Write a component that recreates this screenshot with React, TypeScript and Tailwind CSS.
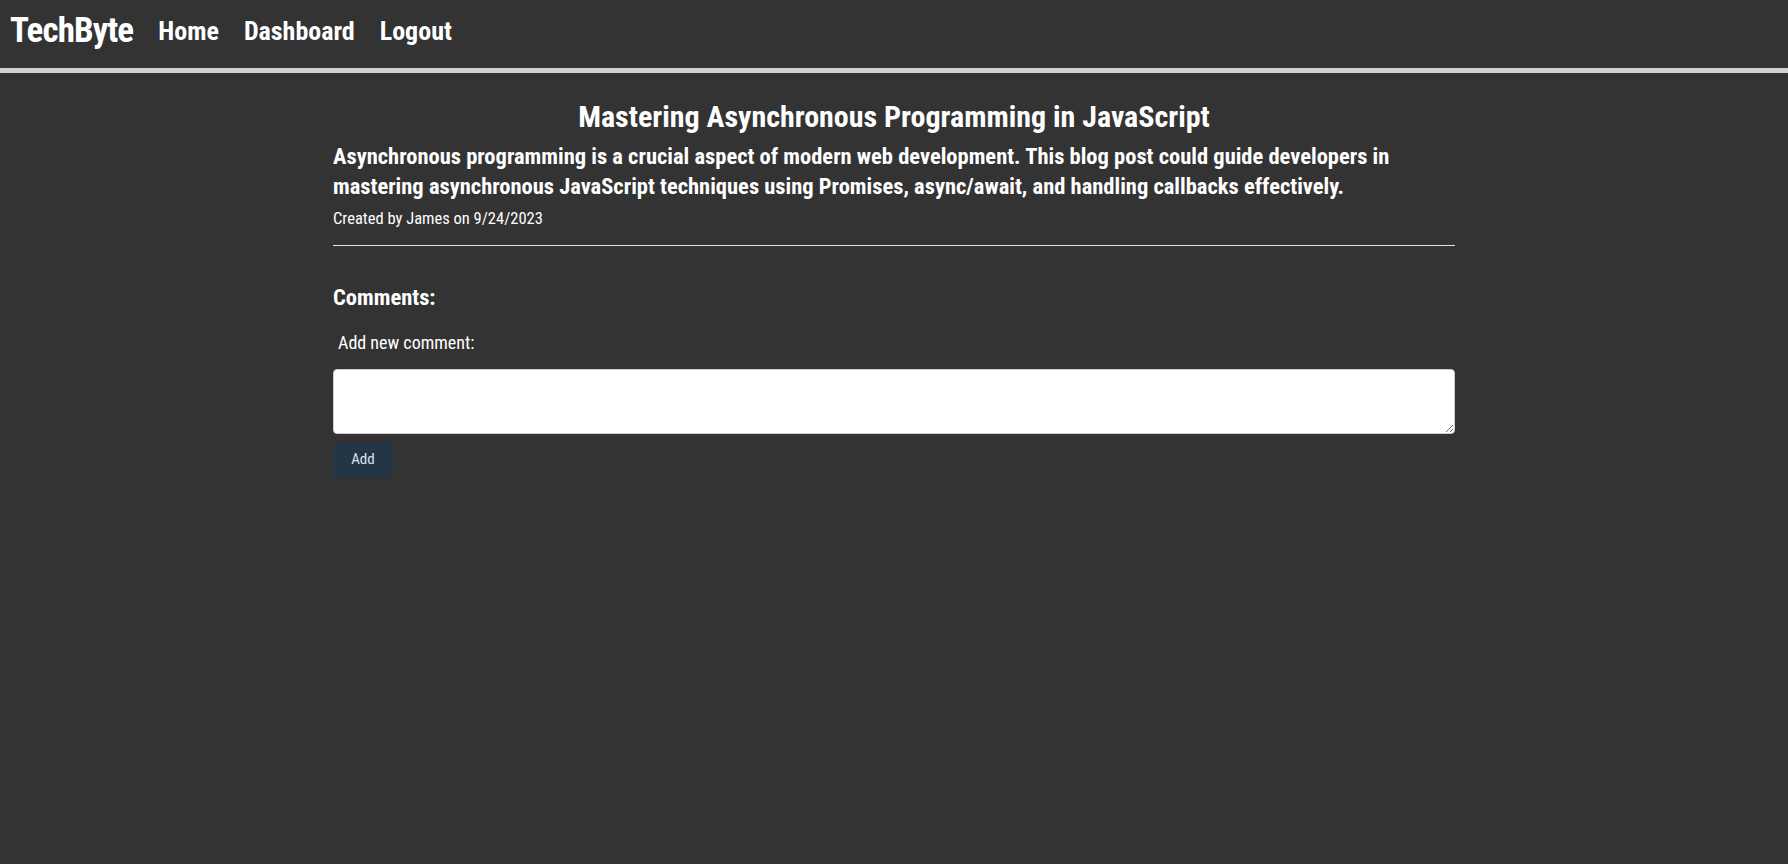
import React from "react";

const font = { fontFamily: '"Roboto Condensed", "Liberation Sans Narrow", "DejaVu Sans Condensed", sans-serif' };

const App: React.FC = () => {
  return (
    <div style={font} className="min-h-screen bg-[#333333] text-white">
      <nav className="h-[73px] border-b-[5px] border-[#d0d0d0] flex items-center gap-[25px] px-[10px] pb-[6px]">
        <a className="text-[35px] font-bold tracking-tight">TechByte</a>
        <a className="text-[26px] font-bold">Home</a>
        <a className="text-[26px] font-bold">Dashboard</a>
        <a className="text-[26px] font-bold">Logout</a>
      </nav>

      <main className="w-[1122px] mx-auto pt-[26px]">
        <h1 className="text-center text-[30px] font-bold leading-[36px]">
          Mastering Asynchronous Programming in JavaScript
        </h1>
        <p className="text-[22.5px] font-bold leading-[30px] mt-[6px]">
          Asynchronous programming is a crucial aspect of modern web development. This blog post could guide developers in mastering asynchronous JavaScript techniques using Promises, async/await, and handling callbacks effectively.
        </p>
        <p className="text-[16.5px] mt-[6px]">Created by James on 9/24/2023</p>
        <hr className="border-t border-[#e5e5e5] mt-[13px]" />

        <h2 className="text-[22.5px] font-bold mt-[35px]">Comments:</h2>
        <label className="block text-[18px] ml-[5px] mt-[14px]">Add new comment:</label>
        <textarea className="block w-full h-[65px] mt-[13px] bg-white rounded border border-[#cccccc] text-black p-2" />
        <button className="mt-[9px] w-[60px] h-[34px] rounded bg-[#253548] text-[#dde3ea] text-[15px]">
          Add
        </button>
      </main>
    </div>
  );
};

export default App;
